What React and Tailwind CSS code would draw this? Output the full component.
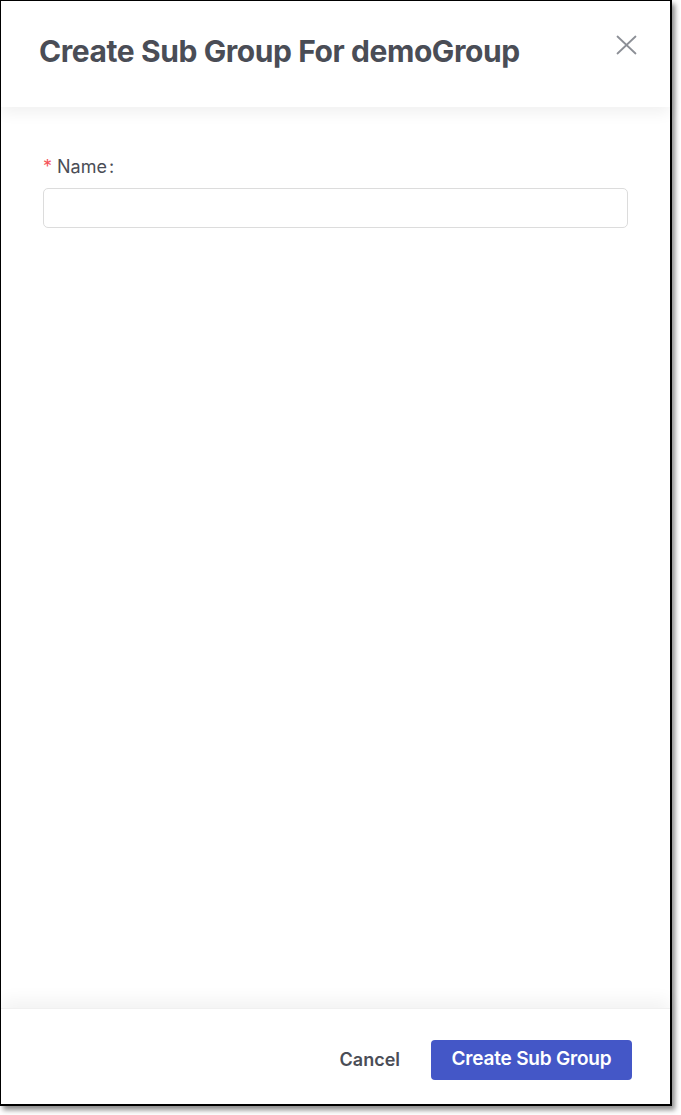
export default function App() {
  return (
    <div className="w-[681px] h-[1115px] bg-white font-['Inter',sans-serif]">
      <div className="w-[672px] h-[1106px] flex flex-col border border-r-2 border-b-2 border-black bg-white shadow-[3px_4px_5px_rgba(0,0,0,0.45)]">
        {/* Header */}
        <div className="relative z-10 h-[106px] shrink-0 flex items-start justify-between pl-[38px] pr-[33px] pt-[31px] shadow-[0_6px_14px_rgba(0,0,0,0.06)]">
          <h1 className="text-[30px] leading-[38px] font-bold text-[#4a4d56] tracking-[-0.42px]">
            Create Sub Group For demoGroup
          </h1>
          <button className="mt-[3px] text-[#8c8f96]">
            <svg width="21" height="20" viewBox="0 0 21 20" fill="none" stroke="currentColor" strokeWidth="1.8" strokeLinecap="round">
              <line x1="1.5" y1="1.5" x2="19.5" y2="18.5" />
              <line x1="19.5" y1="1.5" x2="1.5" y2="18.5" />
            </svg>
          </button>
        </div>

        {/* Body */}
        <div className="flex-1 px-[42px] pt-[49px]">
          <label className="flex items-center text-[18px] leading-[22px] text-[#4a4d56]">
            <span className="text-[#f5555a] mr-[5px] text-[18px]">*</span>
            Name
            <span className="ml-[2px]">:</span>
          </label>
          <input
            type="text"
            className="mt-[10px] w-[585px] h-[40px] rounded-[5px] border border-[#dcdcdc] px-3 outline-none"
          />
        </div>

        {/* Footer */}
        <div className="h-[96px] shrink-0 flex items-center justify-end gap-[31px] pr-[38px] pt-[6px] shadow-[0_-8px_16px_rgba(0,0,0,0.05)] border-t border-[#f0f0f0]">
          <button className="text-[18px] font-semibold text-[#4a4d56]">Cancel</button>
          <button className="w-[201px] h-[40px] rounded-[4px] bg-[#4457c7] text-white text-[19px] font-semibold tracking-[-0.2px]">
            Create Sub Group
          </button>
        </div>
      </div>
    </div>
  );
}
